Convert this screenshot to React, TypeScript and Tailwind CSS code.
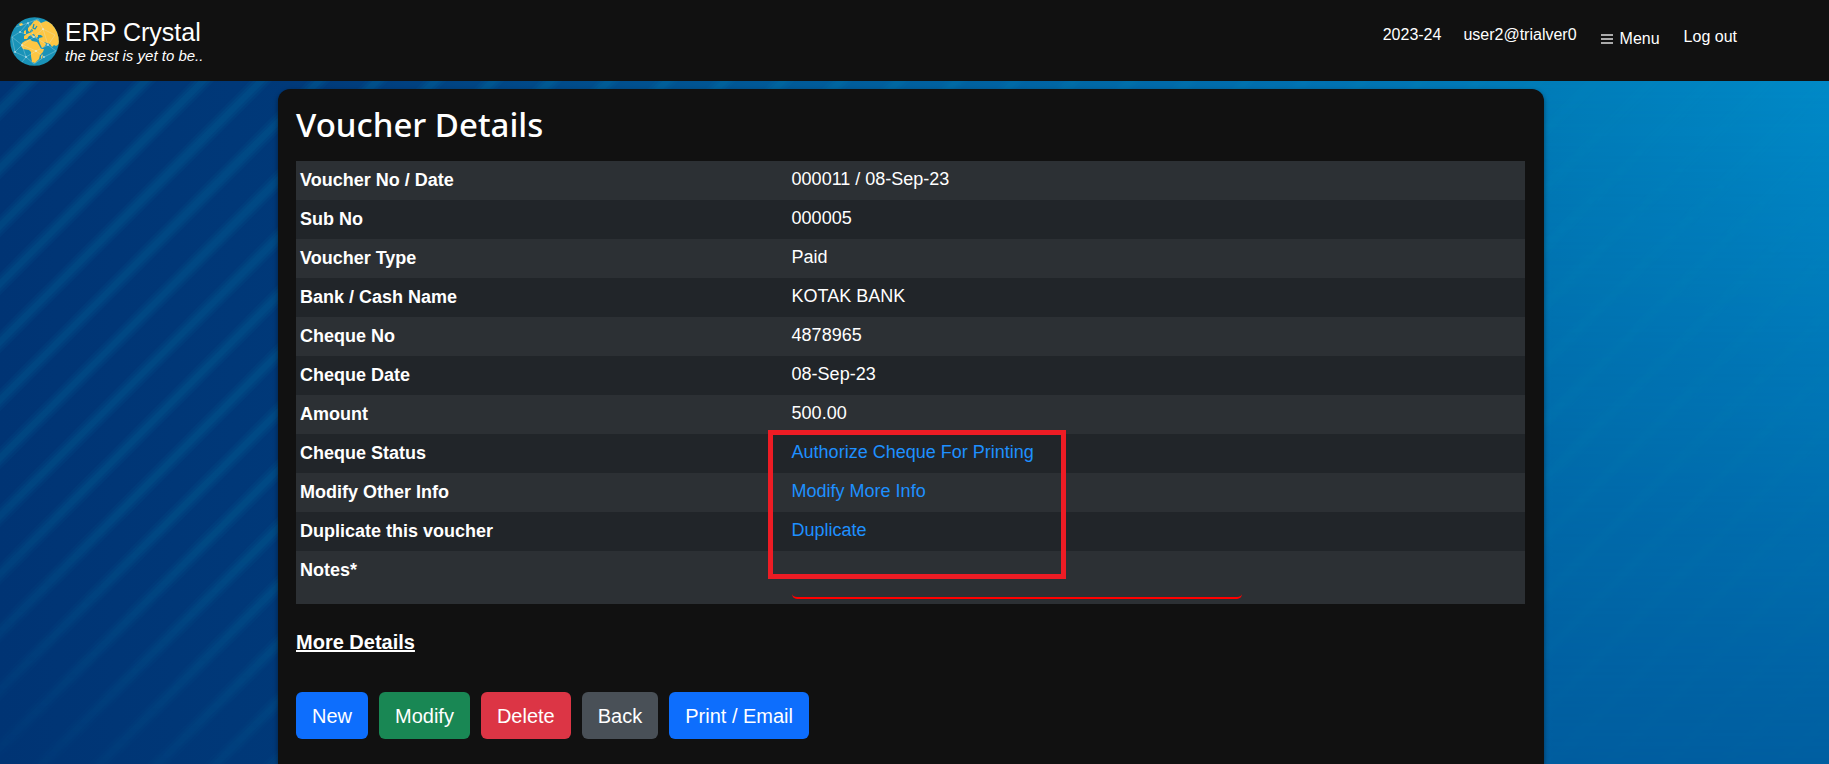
import React from "react";

type Row = { label: string; value: string; link?: boolean; marked?: boolean };

const rows: Row[] = [
  { label: "Voucher No / Date", value: "000011 / 08-Sep-23" },
  { label: "Sub No", value: "000005" },
  { label: "Voucher Type", value: "Paid" },
  { label: "Bank / Cash Name", value: "KOTAK BANK" },
  { label: "Cheque No", value: "4878965" },
  { label: "Cheque Date", value: "08-Sep-23" },
  { label: "Amount", value: "500.00" },
  { label: "Cheque Status", value: "Authorize Cheque For Printing", link: true, marked: true },
  { label: "Modify Other Info", value: "Modify More Info", link: true },
  { label: "Duplicate this voucher", value: "Duplicate", link: true },
];

const actions = [
  { label: "New", color: "bg-[#0d6efd]" },
  { label: "Modify", color: "bg-[#198754]" },
  { label: "Delete", color: "bg-[#dc3545]" },
  { label: "Back", color: "bg-[#495057]" },
  { label: "Print / Email", color: "bg-[#0d6efd]" },
];

function Globe() {
  return (
    <svg viewBox="0 0 49 49" className="h-[49px] w-[49px] shrink-0" aria-hidden="true">
      <defs>
        <clipPath id="globe">
          <circle cx="24.5" cy="24.5" r="24.3" />
        </clipPath>
      </defs>
      <g clipPath="url(#globe)">
        <rect width="49" height="49" fill="#1a93b8" />
        <g fill="#fdc643">
          <path d="M27 3 L24 4 L21 8 L18 11 L18 14 L20 15 L21 12 L23 13 L22 15 L19 16 L17 17 L14 19 L14 22 L17 22 L19 19 L21 18 L23 21 L24 20 L22 17 L24 17 L26 21 L28 20 L28 18 L31 18 L33 20 L29 21 L29 24 L30 27 L32 31 L35 29 L36 27 L34 25 L37 26 L40 27 L42 30 L44 28 L46 29 L49 27 L49 14 L44 7 L36 4 L31 6 Z" />
          <path d="M15 24 L20 22 L22 24 L27 25 L29 28 L31 32 L34 32 L33 35 L30 38 L29 42 L25 46 L22 45 L21 39 L21 35 L19 33 L13 32 L11 29 L12 26 Z" />
          <path d="M9 7 L12 6 L13 8 L10 9 Z" />
          <path d="M14 14 L16 13 L16 17 L14 17 Z" />
          <path d="M31 39 L33 37 L32 41 L31 42 Z" />
        </g>
        <path d="M24 7 L23 11 L25 12 L27 9" stroke="#1a93b8" strokeWidth="1.2" fill="none" />
        <g stroke="#d6eef2" strokeWidth=".5" strokeOpacity=".6" fill="none">
          <path d="M6 10 L18 6 L28 2 M2 20 L10 15 L18 6 M2 20 L12 28 L24 20 L10 15 M12 28 L5 35 L16 40 L12 28 L26 34 L16 40 L24 47 L34 40 L26 34 L38 28 L24 20 L33 12 L45 18 L38 28 L46 34 L34 40 M33 12 L28 2 M5 35 L2 20 M16 40 L12 45 M18 6 L24 20 M38 28 L33 12" />
        </g>
        <g fill="#e8f8fa">
          <circle cx="18" cy="6" r=".8" />
          <circle cx="10" cy="15" r=".8" />
          <circle cx="12" cy="28" r=".8" />
          <circle cx="24" cy="20" r=".8" />
          <circle cx="16" cy="40" r=".8" />
          <circle cx="26" cy="34" r=".8" />
          <circle cx="5" cy="35" r=".8" />
          <circle cx="34" cy="40" r=".8" />
          <circle cx="38" cy="28" r=".8" />
          <circle cx="33" cy="12" r=".8" />
        </g>
      </g>
    </svg>
  );
}

const stripe = "M-58 58 L58 -58 M-58 116 L116 -58 M0 116 L116 0";

function Backdrop() {
  return (
    <div className="absolute inset-0 -z-10 overflow-hidden bg-[linear-gradient(90deg,#003474_0%,#003979_16%,#005a98_43%,#0071b1_71%,#007eba_85%,#008bc9_100%)]">
      <svg className="absolute inset-0 h-full w-full" aria-hidden="true">
        <defs>
          <pattern id="stripes" width="58" height="58" patternUnits="userSpaceOnUse" patternTransform="translate(52 0)">
            <path d={stripe} stroke="#0098c0" strokeWidth="16" strokeOpacity=".05" />
            <path d={stripe} stroke="#0098c0" strokeWidth="11" strokeOpacity=".06" />
            <path d={stripe} stroke="#0098c0" strokeWidth="6" strokeOpacity=".07" />
          </pattern>
          <linearGradient id="fade" x1="0" y1="1" x2="1" y2="0">
            <stop offset="0" stopColor="#fff" stopOpacity=".15" />
            <stop offset=".2" stopColor="#fff" stopOpacity=".95" />
            <stop offset=".6" stopColor="#fff" stopOpacity="1" />
            <stop offset=".85" stopColor="#fff" stopOpacity=".35" />
          </linearGradient>
          <mask id="stripeMask">
            <rect width="100%" height="100%" fill="url(#fade)" />
          </mask>
        </defs>
        <rect width="100%" height="100%" fill="url(#stripes)" mask="url(#stripeMask)" />
      </svg>
      <div className="absolute inset-0 bg-[linear-gradient(90deg,transparent_50%,#00579a_85%)] mask-[linear-gradient(180deg,transparent_8%,#000_115%)]" />
    </div>
  );
}

export default function App() {
  return (
    <div className="relative isolate flex min-h-screen flex-col font-['Liberation_Sans',Arial,sans-serif] text-white">
      <Backdrop />
      <header className="flex h-[81px] items-start justify-between bg-[#111] pl-[10px] pr-[92px]">
        <a href="#home" className="flex items-center gap-[6px] pt-[17px]">
          <Globe />
          <span className="flex flex-col">
            <span className="text-[25px] leading-7">ERP Crystal</span>
            <span className="text-[15px] leading-5 italic">the best is yet to be..</span>
          </span>
        </a>
        <nav className="flex items-start pt-[23px] text-base leading-6">
          <span className="mr-[22px]">2023-24</span>
          <span className="mr-6">user2@trialver0</span>
          <button type="button" className="mr-6 mt-1 flex items-center gap-[7px]">
            <svg viewBox="0 0 12 10" className="h-[10px] w-3" aria-hidden="true">
              <path d="M0 1 H12 M0 5 H12 M0 9 H12" stroke="#aaa" strokeWidth="2" />
            </svg>
            Menu
          </button>
          <a href="#logout" className="mt-[2px]">Log out</a>
        </nav>
      </header>

      <main className="ml-[278px] mr-[285px] mt-2 grow rounded-t-xl bg-[#111] pl-[18px] pr-[19px] pb-6 shadow-[0_2px_5px_rgba(0,0,0,0.45)]">
        <h1 className="pt-[14px] pb-[14px] font-['Noto_Sans','Open_Sans',sans-serif] text-[33px] leading-[44px] font-medium">
          Voucher Details
        </h1>
        <table className="w-full table-fixed border-collapse text-lg leading-[27px]">
          <tbody>
            {rows.map((row) => (
              <tr key={row.label} className="h-[39px] odd:bg-[#2c3034] even:bg-[#212529]">
                <th scope="row" className="w-2/5 px-1 pt-[6px] pb-1 text-left align-top font-bold">
                  {row.label}
                </th>
                <td className="relative px-1 pt-[5px] pb-1 align-top">
                  {row.link ? (
                    <a href={"#" + row.value.toLowerCase().replace(/ /g, "-")} className="text-[#1e90ff]">
                      {row.value}
                    </a>
                  ) : (
                    row.value
                  )}
                  {row.marked && (
                    <span className="pointer-events-none absolute -top-1 -left-5 z-10 h-[149px] w-[298px] border-[5px] border-[#ed1c24]" />
                  )}
                </td>
              </tr>
            ))}
            <tr className="h-[53px] bg-[#2c3034]">
              <th scope="row" className="px-1 pt-[6px] pb-1 text-left align-top font-bold">
                <label htmlFor="notes">Notes*</label>
              </th>
              <td className="px-1 pb-[5px] align-bottom">
                <input
                  id="notes"
                  type="text"
                  required
                  className="block h-10 w-[450px] max-w-full rounded-[5px] border-b-2 border-[#f00] bg-transparent px-2 outline-none"
                />
              </td>
            </tr>
          </tbody>
        </table>

        <a href="#more" className="mt-[23px] inline-block text-xl leading-[30px] font-bold underline">
          More Details
        </a>

        <div className="mt-[35px] flex flex-wrap gap-[11px]">
          {actions.map((action) => (
            <button
              key={action.label}
              type="button"
              className={`rounded-md px-4 pt-[9px] pb-2 text-xl leading-[30px] ${action.color}`}
            >
              {action.label}
            </button>
          ))}
        </div>
      </main>
    </div>
  );
}
